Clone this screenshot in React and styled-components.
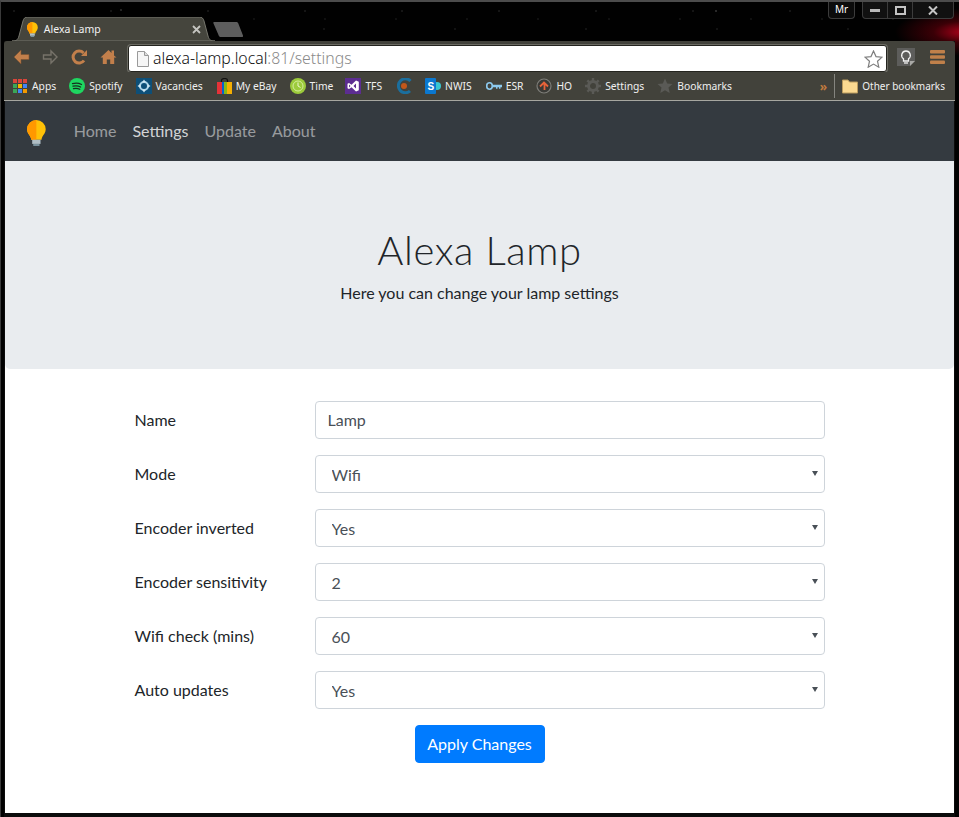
import React from 'react'
import styled, {createGlobalStyle} from 'styled-components'

const sansStack = `Lato, "Open Sans", sans-serif`
const chromeStack = `"Noto Sans", "DejaVu Sans", sans-serif`

const GlobalStyle = createGlobalStyle`
  html, body {
    margin: 0;
    background: #000;
  }
  * { box-sizing: border-box; }
`

const Desktop = styled.div`
  width: 959px;
  height: 817px;
  overflow: hidden;
  display: flex;
  flex-direction: column;
  border-top: 2px solid #4c4c4c;
  border-left: 1px solid #3a3a3a;
  background:
    radial-gradient(1px 1px at 715px 9px, #888, transparent),
    radial-gradient(1px 1px at 120px 8px, #777, transparent),
    radial-gradient(1px 1px at 13px 9px, #444, transparent) 0 0 / 97px 41px,
    radial-gradient(1px 1px at 61px 27px, #3a3a3a, transparent) 0 0 / 131px 41px,
    radial-gradient(1px 1px at 40px 17px, #333, transparent) 0 0 / 71px 37px,
    radial-gradient(70px 24px at 964px 30px, #b0001a, #3a0006 45%, transparent 100%),
    #010101;
`
const TitleBar = styled.div`
  height: 39px;
  flex: none;
  display: flex;
  align-items: flex-end;
  padding: 0 5px 0 11px;
`
const Tab = styled.div`
  position: relative;
  width: 203px;
  height: 24px;
  display: flex;
  align-items: center;
  padding: 0 14px 0 15px;
  font: 10.5px ${chromeStack};
  color: #f2f2f2;
`
const TabShape = styled.svg`
  position: absolute;
  left: 0;
  top: 0;
`
const TabIcon = styled.span`
  position: relative;
  display: flex;
  margin-right: 6px;
`
const TabTitle = styled.span`
  position: relative;
  flex: 1;
`
const TabClose = styled.svg`
  position: relative;
`
const NewTab = styled.svg`
  align-self: flex-end;
  margin: 0 0 4px -2px;
`
const WindowButtons = styled.div`
  margin-left: auto;
  align-self: flex-start;
  display: flex;
  gap: 7px;
`
const ProfileBadge = styled.div`
  width: 27px;
  height: 17px;
  border: 1px solid #3c3c3c;
  border-top: 0;
  border-radius: 0 0 4px 4px;
  background: #0b0b0b;
  color: #fff;
  font: 10px/15px ${chromeStack};
  text-align: center;
`
const Controls = styled.div`
  display: flex;
  height: 17px;
  border: 1px solid #3c3c3c;
  border-top: 0;
  border-radius: 0 0 4px 4px;
  background: #111;
`
const Control = styled.div`
  width: ${props => props.$width}px;
  display: flex;
  align-items: center;
  justify-content: center;
  border-left: ${props => props.$first ? 0 : `1px solid #3c3c3c`};
`
const Browser = styled.div`
  flex: 1;
  min-height: 0;
  margin: 0 4px 0 3px;
  display: flex;
  flex-direction: column;
  background: #0c0c0c;
`
const Toolbar = styled.div`
  height: 31px;
  flex: none;
  display: flex;
  align-items: flex-end;
  padding: 0 8px 0 9px;
  background: #42423b;
  border-radius: 3px 3px 0 0;
`
const NavIcons = styled.div`
  display: flex;
  align-self: center;
  gap: 12px;
  margin-right: 11px;
`
const AddressBar = styled.div`
  width: 759px;
  height: 27px;
  display: flex;
  align-items: center;
  padding: 0 3px 0 7px;
  background: #fff;
  border: 1px solid #24241f;
  border-radius: 3px;
  box-shadow: 0 0 0 1px #6a6a62;
`
const Url = styled.div`
  flex: 1;
  margin-left: 3px;
  font: 300 15.8px/1 ${chromeStack};
  color: #111;
`
const UrlRest = styled.span`
  color: #8a8a8a;
`
const ToolbarEnd = styled.div`
  display: flex;
  align-items: center;
  align-self: center;
  gap: 15px;
  margin-left: 10px;
`
const Bookmarks = styled.div`
  height: 29px;
  flex: none;
  display: flex;
  align-items: center;
  padding: 0 10px 0 9px;
  background: #42423b;
  border-bottom: 1px solid #a6a6a0;
`
const Bookmark = styled.div`
  display: flex;
  align-items: center;
  gap: 4px;
  margin-right: ${props => props.$space}px;
  font: ${props => props.$size || 10.3}px ${chromeStack};
  color: #f0f0f0;
  white-space: nowrap;
`
const Chevrons = styled.div`
  margin-left: auto;
  color: #c07a3e;
  font: bold 12px ${chromeStack};
`
const BarDivider = styled.div`
  width: 1px;
  height: 24px;
  margin: 0 7px 0 7px;
  background: #85857f;
`
const Page = styled.div`
  flex: 1;
  min-height: 0;
  margin: 0 1px 4px 1px;
  background: #fff;
  font-family: ${sansStack};
  color: #212529;
`
const NavBar = styled.nav`
  height: 60px;
  display: flex;
  align-items: center;
  padding: 0 16px;
  background: #343a40;
`
const Brand = styled.div`
  display: flex;
  margin: 4px 20px 0 6px;
`
const NavLink = styled.a`
  padding: 6px 8px 8px;
  font-size: 16px;
  color: ${props => props.$active ? `rgba(255,255,255,.8)` : `rgba(255,255,255,.5)`};
  font-weight: 400;
`
const Jumbotron = styled.header`
  height: 208px;
  padding: 64px 32px;
  background: #e9ecef;
  border-radius: 0 0 5px 5px;
  text-align: center;
`
const Heading = styled.h1`
  margin: 0 0 7px;
  padding-top: 1px;
  font-size: 40px;
  font-weight: 300;
  line-height: 48px;
  letter-spacing: .6px;
`
const Lead = styled.p`
  margin: 0;
  font-size: 16px;
  line-height: 24px;
`
const Form = styled.form`
  width: 690px;
  margin: 32px auto 0;
`
const Row = styled.div`
  display: grid;
  grid-template-columns: 180px 510px;
  align-items: center;
  margin-bottom: 16px;
`
const Label = styled.label`
  padding-bottom: 2px;
  font-size: 16px;
`
const fieldStyles = `
  width: 100%;
  height: 38px;
  font-family: ${sansStack};
  font-size: 16px;
  color: #495057;
  background: #fff;
  border: 1px solid #ced4da;
  border-radius: 4px;
  outline: 0;
`
const Input = styled.input`
  ${fieldStyles}
  padding: 5px 12px 7px;
`
const Select = styled.select`
  ${fieldStyles}
  display: block;
  padding: 0 24px 0 16px;
  appearance: none;
`
const SelectWrap = styled.div`
  position: relative;

  &::after {
    content: "";
    position: absolute;
    right: 7px;
    top: 16px;
    border-style: solid;
    border-width: 5px 3.5px 0;
    border-color: #495057 transparent transparent;
    pointer-events: none;
  }
`
const Actions = styled.div`
  text-align: center;
`
const ApplyButton = styled.button`
  width: 130px;
  height: 38px;
  padding: 0 0 2px;
  font-family: ${sansStack};
  font-size: 16px;
  color: #fff;
  background: #007bff;
  border: 1px solid #007bff;
  border-radius: 4px;
`

const Bulb = ({size = 16}) => (
  <svg width={size * 0.72} height={size} viewBox="0 0 18 25">
    <path d="M9 0a9 9 0 0 0-9 9c0 3.400 2 5 3.200 7.200.5 1 .8 1.800.8 2.800h10c0-1 .3-1.800.8-2.800C16 14 18 12.400 18 9a9 9 0 0 0-9-9z" fill="#ffc107"/>
    <path d="M9 0a9 9 0 0 0-9 9c0 3.400 2 5 3.200 7.200.5 1 .8 1.800.8 2.800h5z" fill="#ff9800"/>
    <rect x="5" y="19" width="8" height="4" fill="#b0bec5"/>
    <rect x="6" y="23" width="6" height="2" fill="#78909c"/>
  </svg>
)

const ArrowBack = () => (
  <svg width="17" height="16" viewBox="0 0 17 16">
    <path d="M8 1 1 8l7 7V10.500h8v-5H8z" fill="#c27f4b" stroke="#7c5330" strokeWidth=".6"/>
  </svg>
)
const ArrowForward = () => (
  <svg width="17" height="16" viewBox="0 0 17 16">
    <path d="M9 2l6 6-6 6v-4H1.500V6H9z" fill="none" stroke="#77736a" strokeWidth="1.400"/>
  </svg>
)
const Reload = () => (
  <svg width="17" height="16" viewBox="0 0 17 16">
    <path d="M13 11.500A6 6 0 1 1 12.500 4" fill="none" stroke="#c27f4b" strokeWidth="3"/>
    <path d="M10 7h6V1z" fill="#c27f4b"/>
  </svg>
)
const HomeIcon = () => (
  <svg width="17" height="16" viewBox="0 0 17 16">
    <path d="M8.500 1 0.500 8.500h2.300V15h4v-4.500h3.400V15h4V8.500h2.300L14 6.500V1.500h-2.500v2.500z" fill="#c27f4b"/>
  </svg>
)
const PageIcon = () => (
  <svg width="14" height="16" viewBox="0 0 14 16">
    <path d="M1.500.5h7l4 4v11h-11z" fill="#f6f6f6" stroke="#9a9a9a"/>
    <path d="M8.500.5v4h4" fill="#ddd" stroke="#9a9a9a"/>
  </svg>
)
const StarOutline = () => (
  <svg width="19" height="18" viewBox="0 0 19 18">
    <path d="M9.500 1l2.500 5.600 6 .6-4.500 4 1.300 6-5.300-3.100-5.300 3.100 1.300-6-4.500-4 6-.6z" fill="#fff" stroke="#7e7e7e" strokeWidth="1.200"/>
  </svg>
)
const KeepIcon = () => (
  <svg width="18" height="18" viewBox="0 0 18 18">
    <path d="M0 0h18v13l-5 5H0z" fill="#5d5d5b"/>
    <path d="M13 18v-5h5z" fill="#a9a9a6"/>
    <path d="M9 3a4.300 4.300 0 0 0-2.500 7.800V13h5v-2.200A4.300 4.300 0 0 0 9 3z" fill="none" stroke="#f2f2f2" strokeWidth="1.300"/>
    <path d="M7 15h4" stroke="#f2f2f2" strokeWidth="1.300"/>
  </svg>
)
const MenuIcon = () => (
  <svg width="15" height="16" viewBox="0 0 15 16">
    <rect y="1" width="15" height="3.500" rx="1" fill="#c0804a"/>
    <rect y="6.300" width="15" height="3.500" rx="1" fill="#c0804a"/>
    <rect y="11.500" width="15" height="3.500" rx="1" fill="#c0804a"/>
  </svg>
)

const AppsIcon = () => (
  <svg width="15" height="14" viewBox="0 0 15 14">
    {[`#d9453a`, `#d9453a`, `#d9453a`, `#3aa757`, `#f4b400`, `#4285f4`, `#3aa757`, `#4285f4`, `#f49a00`].map((color, i) => (
      <rect key={i} x={(i % 3) * 5} y={Math.floor(i / 3) * 5} width="4" height="4" fill={color}/>
    ))}
  </svg>
)
const SpotifyIcon = () => (
  <svg width="16" height="16" viewBox="0 0 16 16">
    <circle cx="8" cy="8" r="8" fill="#1ed760"/>
    <path d="M3.500 5.700c3-.8 6.500-.6 9 .8M4 8.200c2.600-.6 5.400-.4 7.600.8M4.500 10.600c2.200-.5 4.500-.3 6.300.7" fill="none" stroke="#17301f" strokeWidth="1.300" strokeLinecap="round"/>
  </svg>
)
const VacanciesIcon = () => (
  <svg width="16" height="16" viewBox="0 0 16 16">
    <rect width="16" height="16" fill="#0d4f78"/>
    <circle cx="8" cy="8" r="4" fill="none" stroke="#a9d3e8" strokeWidth="2"/>
    <path d="M8 1.500l2 3h-4zM8 14.500l2-3h-4zM1.500 8l3-2v4zM14.500 8l-3-2v4z" fill="#cfe6f2"/>
  </svg>
)
const EbayIcon = () => (
  <svg width="15" height="16" viewBox="0 0 15 16">
    <path d="M4.500 4V2.500a3 2 0 0 1 6 0V4" fill="none" stroke="#111" strokeWidth="1.200"/>
    <rect y="4" width="5" height="12" fill="#e53238"/>
    <rect x="5" y="4" width="5" height="12" fill="#0064d2"/>
    <rect x="10" y="4" width="5" height="12" fill="#f5af02"/>
    <rect x="7" y="4" width="3" height="12" fill="#86b817"/>
  </svg>
)
const TimeIcon = () => (
  <svg width="16" height="16" viewBox="0 0 16 16">
    <circle cx="8" cy="8" r="8" fill="#9ccb3b"/>
    <circle cx="8" cy="8" r="5" fill="none" stroke="#d6ec9c"/>
    <path d="M8 4.500V8l2.500 1.500" fill="none" stroke="#eef8d0"/>
  </svg>
)
const VisualStudioIcon = () => (
  <svg width="16" height="16" viewBox="0 0 16 16">
    <rect width="16" height="16" fill="#5c2d91"/>
    <path d="M11 2.500l2.800 1.200v8.600L11 13.500 6.500 9.200 4 11l-1.500-.8V5.800L4 5l2.500 1.800zM11 5.500L8.500 8l2.500 2.500zM4 6.500v3L5.500 8z" fill="#fff"/>
  </svg>
)
const OrbIcon = () => (
  <svg width="15" height="16" viewBox="0 0 15 16">
    <path d="M13.500 3A7 7 0 1 0 13 13" fill="none" stroke="#1b6f9e" strokeWidth="3"/>
    <circle cx="7" cy="8" r="3" fill="#c2571a"/>
  </svg>
)
const SharePointIcon = () => (
  <svg width="16" height="16" viewBox="0 0 16 16">
    <circle cx="12" cy="8" r="4" fill="#37c6d0"/>
    <rect width="11" height="16" rx="1" fill="#0b78d0"/>
    <text x="2.400" y="12" fontSize="10" fontWeight="700" fontFamily="Liberation Sans, sans-serif" fill="#fff">S</text>
  </svg>
)
const KeyIcon = () => (
  <svg width="16" height="16" viewBox="0 0 16 16">
    <ellipse cx="3.500" cy="8" rx="2.800" ry="3.200" fill="none" stroke="#8cc9ee" strokeWidth="1.600"/>
    <path d="M6 6.800h10v2.400h-1.500v1.500H13V9.200h-1.500v1.500H10V9.200H6z" fill="#8cc9ee"/>
  </svg>
)
const HoIcon = () => (
  <svg width="16" height="16" viewBox="0 0 16 16">
    <circle cx="8" cy="8" r="7" fill="#3a3a36" stroke="#7d7d78" strokeWidth="1.200"/>
    <path d="M4 8.500L8 4.500 12 8.500M8.500 5v7" fill="none" stroke="#e8633a" strokeWidth="1.800"/>
  </svg>
)
const GearIcon = () => (
  <svg width="16" height="16" viewBox="0 0 16 16">
    <circle cx="8" cy="8" r="4.500" fill="none" stroke="#5a5a56" strokeWidth="3"/>
    <path d="M8 0v16M0 8h16M2.300 2.300l11.400 11.400M13.700 2.300L2.300 13.700" stroke="#5a5a56" strokeWidth="2.400" strokeDasharray="3 10"/>
  </svg>
)
const StarFilled = () => (
  <svg width="16" height="16" viewBox="0 0 16 16">
    <path d="M8 .5l2.200 5 5.300.5-4 3.600 1.200 5.400L8 12.200 3.300 15l1.200-5.400-4-3.600 5.300-.5z" fill="#5a5a56"/>
  </svg>
)
const FolderIcon = () => (
  <svg width="16" height="16" viewBox="0 0 16 16">
    <path d="M.5 2h5.500l1.500 2h8v11H.5z" fill="#fbd990" stroke="#b99a5e"/>
  </svg>
)

const bookmarks = [
  {name: `Apps`, Icon: AppsIcon, space: 13},
  {name: `Spotify`, Icon: SpotifyIcon, space: 13},
  {name: `Vacancies`, Icon: VacanciesIcon, space: 14},
  {name: `My eBay`, Icon: EbayIcon, space: 13},
  {name: `Time`, Icon: TimeIcon, space: 12},
  {name: `TFS`, Icon: VisualStudioIcon, space: 15},
  {name: ``, Icon: OrbIcon, space: 13},
  {name: `NWIS`, Icon: SharePointIcon, space: 14},
  {name: `ESR`, Icon: KeyIcon, space: 13},
  {name: `HO`, Icon: HoIcon, space: 13},
  {name: `Settings`, Icon: GearIcon, space: 13},
  {name: `Bookmarks`, Icon: StarFilled, space: 13}
]

const fields = [
  {label: `Mode`, value: `Wifi`, options: [`Wifi`, `Access point`]},
  {label: `Encoder inverted`, value: `Yes`, options: [`Yes`, `No`]},
  {label: `Encoder sensitivity`, value: `2`, options: [`1`, `2`, `3`, `4`]},
  {label: `Wifi check (mins)`, value: `60`, options: [`15`, `30`, `60`]},
  {label: `Auto updates`, value: `Yes`, options: [`Yes`, `No`]}
]

const App = () => (
  <Desktop>
    <GlobalStyle />
    <TitleBar>
      <Tab>
        <TabShape width="203" height="24" viewBox="0 0 203 24">
          <path d="M0 24c4 0 6-1 7-5l4-15c.6-2.400 2-4 4.500-4h172c2.500 0 3.900 1.600 4.500 4l4 15c1 4 3 5 7 5z" fill="#45453d" stroke="#77776e"/>
        </TabShape>
        <TabIcon><Bulb size={15} /></TabIcon>
        <TabTitle>Alexa Lamp</TabTitle>
        <TabClose width="9" height="9" viewBox="0 0 9 9">
          <path d="M1 1l7 7M8 1l-7 7" stroke="#c4c4c0" strokeWidth="1.800"/>
        </TabClose>
      </Tab>
      <NewTab width="31" height="15" viewBox="0 0 31 15">
        <path d="M1 0h22c1.500 0 2 .6 2.500 2L30 13.500c.2 1-.3 1.500-1 1.500H8c-1.500 0-2-.6-2.500-2L.5 1.500C.2.600.4 0 1 0z" fill="#5d5d5d"/>
      </NewTab>
      <WindowButtons>
        <ProfileBadge>Mr</ProfileBadge>
        <Controls>
          <Control $width={24} $first>
            <svg width="10" height="4" viewBox="0 0 10 4"><rect y="1" width="10" height="3" fill="#b9b9b9"/></svg>
          </Control>
          <Control $width={25}>
            <svg width="11" height="9" viewBox="0 0 11 9"><rect x="1" y="1" width="9" height="7" fill="none" stroke="#c4c4c4" strokeWidth="2"/></svg>
          </Control>
          <Control $width={41}>
            <svg width="10" height="9" viewBox="0 0 10 9"><path d="M1 .5l8 8M9 .5l-8 8" stroke="#c4c4c4" strokeWidth="2"/></svg>
          </Control>
        </Controls>
      </WindowButtons>
    </TitleBar>
    <Browser>
      <Toolbar>
        <NavIcons>
          <ArrowBack />
          <ArrowForward />
          <Reload />
          <HomeIcon />
        </NavIcons>
        <AddressBar>
          <PageIcon />
          <Url>alexa-lamp.local<UrlRest>:81/settings</UrlRest></Url>
          <StarOutline />
        </AddressBar>
        <ToolbarEnd>
          <KeepIcon />
          <MenuIcon />
        </ToolbarEnd>
      </Toolbar>
      <Bookmarks>
        {bookmarks.map(({name, Icon, space}) => (
          <Bookmark key={name || `orb`} $space={space}>
            <Icon />
            {name && <span>{name}</span>}
          </Bookmark>
        ))}
        <Chevrons>»</Chevrons>
        <BarDivider />
        <Bookmark $space={0} $size={10}>
          <FolderIcon />
          <span>Other bookmarks</span>
        </Bookmark>
      </Bookmarks>
      <Page>
        <NavBar>
          <Brand><Bulb size={26} /></Brand>
          <NavLink>Home</NavLink>
          <NavLink $active>Settings</NavLink>
          <NavLink>Update</NavLink>
          <NavLink>About</NavLink>
        </NavBar>
        <Jumbotron>
          <Heading>Alexa Lamp</Heading>
          <Lead>Here you can change your lamp settings</Lead>
        </Jumbotron>
        <Form>
          <Row>
            <Label>Name</Label>
            <Input defaultValue="Lamp" />
          </Row>
          {fields.map(({label, value, options}) => (
            <Row key={label}>
              <Label>{label}</Label>
              <SelectWrap>
                <Select defaultValue={value}>
                  {options.map(option => <option key={option}>{option}</option>)}
                </Select>
              </SelectWrap>
            </Row>
          ))}
          <Actions>
            <ApplyButton type="button">Apply Changes</ApplyButton>
          </Actions>
        </Form>
      </Page>
    </Browser>
  </Desktop>
)

export default App
